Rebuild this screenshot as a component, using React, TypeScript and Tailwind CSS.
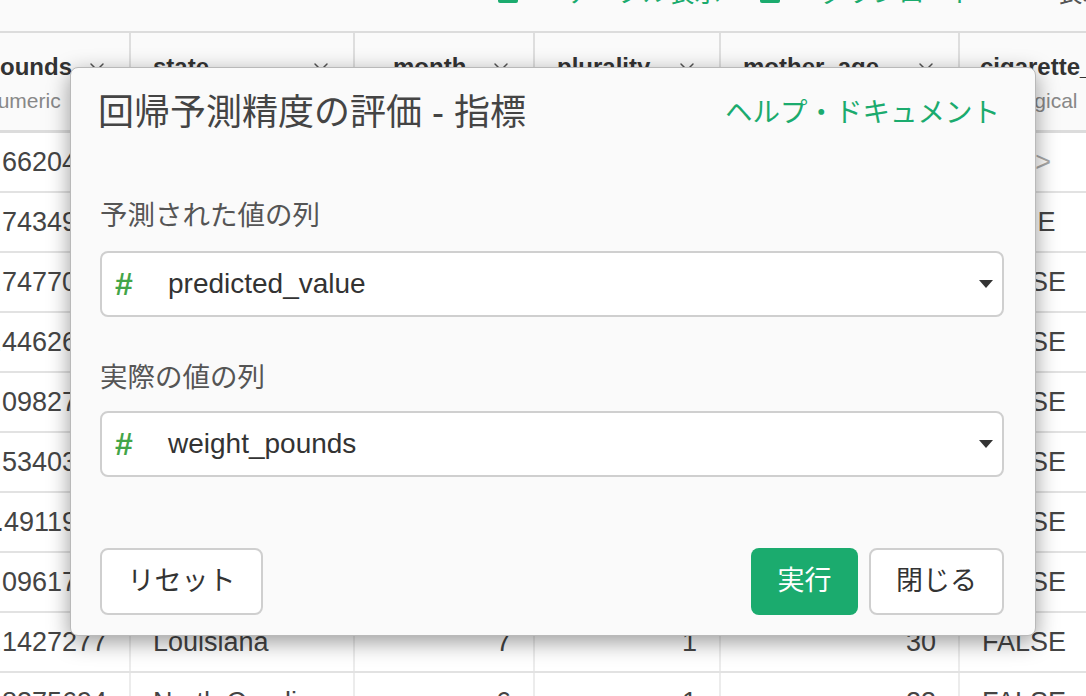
import React from "react";
import { ChevronDown } from "lucide-react";

const FONT = "font-['Liberation_Sans','Noto_Sans_CJK_JP',Arial,sans-serif]";

type Col = { name: string; type: string; w: string; align: "left" | "right"; hpl: string; tml: string };

const cols: Col[] = [
  { name: "weight_pounds", type: "numeric", w: "w-[257px]", align: "right", hpl: "pl-[22px]", tml: "ml-[90px]" },
  { name: "state", type: "character", w: "w-[224px]", align: "left", hpl: "pl-[22px]", tml: "ml-0" },
  { name: "month", type: "numeric", w: "w-[180px]", align: "right", hpl: "pl-[38px]", tml: "ml-0" },
  { name: "plurality", type: "numeric", w: "w-[186px]", align: "right", hpl: "pl-[22px]", tml: "ml-0" },
  { name: "mother_age", type: "numeric", w: "w-[239px]", align: "right", hpl: "pl-[22px]", tml: "ml-0" },
  { name: "cigarette_use", type: "logical", w: "w-[240px]", align: "left", hpl: "pl-[20px]", tml: "ml-[38px]" },
];

const rows: string[][] = [
  ["7.6620432", "Washington", "4", "1", "28", "<NA>"],
  ["7.7434902", "Texas", "8", "1", "32", "TRUE"],
  ["6.7477018", "Ohio", "2", "1", "25", "FALSE"],
  ["8.4462681", "California", "6", "1", "27", "FALSE"],
  ["7.0982745", "New York", "9", "1", "33", "FALSE"],
  ["6.5340319", "Illinois", "3", "1", "24", "FALSE"],
  ["7.4911963", "Georgia", "11", "1", "29", "FALSE"],
  ["8.0961774", "Florida", "5", "1", "31", "FALSE"],
  ["7.1427277", "Louisiana", "7", "1", "30", "FALSE"],
  ["6.8375694", "North Carolina", "6", "1", "23", "FALSE"],
];

function Caret() {
  return (
    <svg width="14" height="8" viewBox="0 0 14 8" className="shrink-0">
      <path d="M0 0 L14 0 L7 8 Z" fill="#333" />
    </svg>
  );
}

function SelectBox({ value }: { value: string }) {
  return (
    <div className="flex h-[66px] items-center rounded-[8px] border-2 border-[#cfcfcf] bg-white pl-[13px] pr-[9px]">
      <span className="w-[53px] text-[32px] font-bold leading-none text-[#43a548]">#</span>
      <span className="flex-1 text-[28px] text-[#333]">{value}</span>
      <Caret />
    </div>
  );
}

export default function App() {
  return (
    <div className={`relative h-[696px] w-[1086px] overflow-hidden bg-[#fafafa] ${FONT}`}>
      {/* top toolbar (mostly scrolled off) */}
      <div className="h-[31px]">
        <div className="flex h-[3px] items-end">
          <div className="w-[498px] shrink-0" />
          <div className="h-[20px] w-[20px] shrink-0 rounded-[2px] bg-[#1bab6e]" />
          <div className="mb-[-3px] ml-[48px] whitespace-nowrap text-[26px] leading-[26px] text-[#1bab6e]">テーブル表示</div>
          <div className="w-[40px] shrink-0" />
          <div className="h-[20px] w-[20px] shrink-0 rounded-[2px] bg-[#1bab6e]" />
          <div className="mb-[-3px] ml-[40px] whitespace-nowrap text-[26px] leading-[26px] text-[#1bab6e]">ダウンロード</div>
          <div className="mb-[-3px] ml-[80px] whitespace-nowrap text-[26px] leading-[26px] text-[#555]">表示する</div>
        </div>
      </div>

      {/* table */}
      <div className="-ml-[126px] w-max">
        {/* header */}
        <div className="flex h-[102px] border-t-2 border-b-[3px] border-[#dcdcdc] bg-[#fafafa]">
          {cols.map((c, i) => (
            <div
              key={c.name}
              className={`${c.w} ${c.hpl} flex shrink-0 flex-col pr-[20px] pt-[19px] ${i < cols.length - 1 ? "border-r-2 border-[#dedede]" : ""}`}
            >
              <div className="flex items-center justify-between">
                <span className="whitespace-nowrap text-[24px] font-bold leading-[30px] text-[#333]">{c.name}</span>
                <ChevronDown size={24} strokeWidth={1.5} color="#555" className="shrink-0" />
              </div>
              <div className={`${c.tml} mt-[6px] text-[21px] leading-[26px] text-[#888]`}>{c.type}</div>
            </div>
          ))}
        </div>
        {/* rows */}
        {rows.map((r, ri) => (
          <div key={ri} className="flex h-[60px] border-b-2 border-[#e2e2e2] bg-white">
            {cols.map((c, ci) => (
              <div
                key={ci}
                className={`${c.w} flex shrink-0 items-center overflow-hidden whitespace-nowrap text-[27px] ${
                  c.align === "right" ? "justify-end pr-[22px]" : "justify-start pl-[22px]"
                } ${r[ci] === "<NA>" ? "text-[#aaa]" : "text-[#444]"} ${ci < cols.length - 1 ? "border-r-2 border-[#ececec]" : ""}`}
              >
                {r[ci]}
              </div>
            ))}
          </div>
        ))}
      </div>

      {/* dialog */}
      <div className="absolute left-[70px] top-[67px] flex h-[569px] w-[966px] flex-col rounded-[8px] border border-[#b9b9b9] bg-[#fafafa] shadow-[0_6px_22px_rgba(0,0,0,0.4)]">
        <div className="flex items-center justify-between pl-[27px] pr-[35px] pt-[24px]">
          <div className="whitespace-nowrap text-[36px] leading-[42px] text-[#444]">回帰予測精度の評価 - 指標</div>
          <div className="whitespace-nowrap text-[27.5px] leading-[34px] text-[#1bab6e]">ヘルプ・ドキュメント</div>
        </div>
        <div className="flex flex-col pl-[29px] pr-[31px]">
          <div className="mt-[65px] text-[27.5px] leading-[34px] text-[#555]">予測された値の列</div>
          <div className="mt-[18px]">
            <SelectBox value="predicted_value" />
          </div>
          <div className="mt-[44px] text-[27.5px] leading-[34px] text-[#555]">実際の値の列</div>
          <div className="mt-[16px]">
            <SelectBox value="weight_pounds" />
          </div>
          <div className="mt-[71px] flex items-center">
            <button className="flex h-[67px] w-[163px] items-center justify-center rounded-[8px] border-2 border-[#cfcfcf] bg-white text-[27px] text-[#333]">
              リセット
            </button>
            <div className="flex-1" />
            <button className="flex h-[67px] w-[107px] items-center justify-center rounded-[8px] bg-[#1bab6e] text-[27px] text-white">
              実行
            </button>
            <button className="ml-[11px] flex h-[67px] w-[135px] items-center justify-center rounded-[8px] border-2 border-[#cfcfcf] bg-white text-[27px] text-[#333]">
              閉じる
            </button>
          </div>
        </div>
      </div>
    </div>
  );
}
